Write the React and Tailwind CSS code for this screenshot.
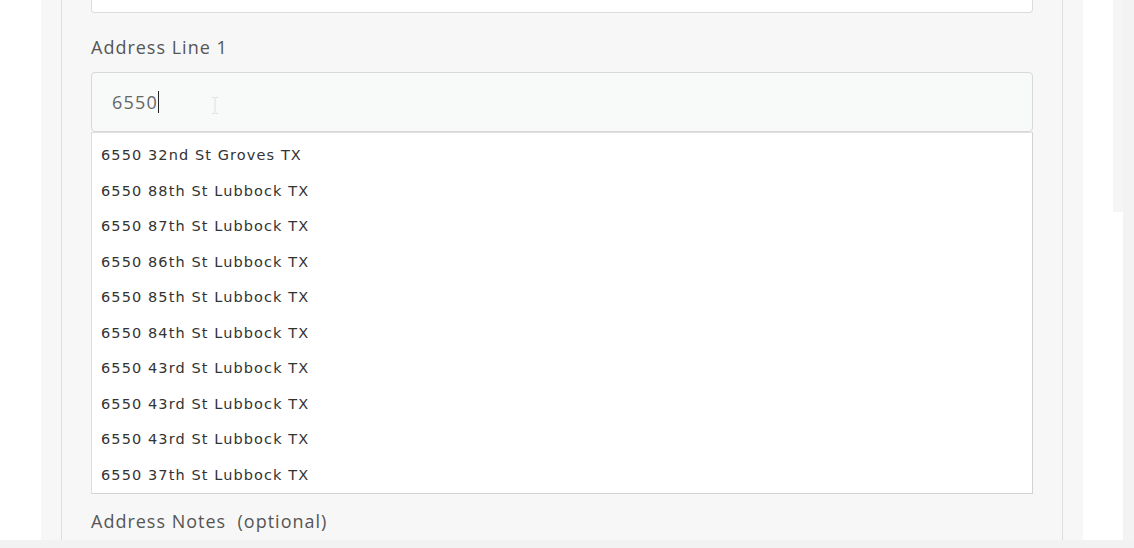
import React from "react";

const suggestions = [
  "6550 32nd St Groves TX",
  "6550 88th St Lubbock TX",
  "6550 87th St Lubbock TX",
  "6550 86th St Lubbock TX",
  "6550 85th St Lubbock TX",
  "6550 84th St Lubbock TX",
  "6550 43rd St Lubbock TX",
  "6550 43rd St Lubbock TX",
  "6550 43rd St Lubbock TX",
  "6550 37th St Lubbock TX",
];

export default function App() {
  return (
    <div className="h-[548px] w-full flex flex-col bg-white overflow-hidden">
      <div className="flex flex-1 min-h-0">
        <div className="w-[41px] bg-white" />

        {/* PANEL */}
        <div className="w-[1042px] bg-[#f7f7f7] px-[20px]">
          <div className="h-full border-x border-[#dcdfe3] px-[29px] font-[family-name:Open_Sans,sans-serif]">
            {/* previous field (cut off) */}
            <div className="h-[13px] bg-white border-x border-b border-[#dcdcdc] rounded-b-[4px]" />

            <label className="block mt-[24px] mb-[15px] text-[18px] leading-[20px] text-[#555] tracking-[1px]">
              Address Line 1
            </label>

            <div className="relative h-[60px] bg-[#f8f9f9] border border-[#d8d8d8] rounded-[4px] flex items-center pl-[20px]">
              <span className="text-[18px] text-[#666] tracking-[1.2px]">6550</span>
              <span className="w-px h-[22px] bg-[#222]" />
              <span className="absolute left-[119px] top-[24px] text-[#dedede]">
                <svg width="8" height="17" viewBox="0 0 8 17" fill="none" stroke="currentColor" strokeWidth="1">
                  <path d="M1 0.5h2.5M4.5 0.5H7M4 1v15M1 16.5h2.5M4.5 16.5H7" />
                </svg>
              </span>
            </div>

            {/* SUGGESTIONS */}
            <ul className="bg-white border border-[#dedede] border-r-[#d2d2d2] border-b-[#d2d2d2] pt-[5px] font-[family-name:DejaVu_Sans,sans-serif]">
              {suggestions.map((s, i) => (
                <li
                  key={i}
                  className="h-[35.5px] flex items-center pt-[1px] px-[9px] text-[14.5px] tracking-[1.1px] text-[#333]"
                >
                  {s}
                </li>
              ))}
            </ul>

            <label className="block mt-[17px] text-[18px] leading-[20px] text-[#555] tracking-[1px]">
              Address Notes &nbsp;(optional)
            </label>
          </div>
        </div>

        {/* right side */}
        <div className="w-[40px] bg-white flex">
          <div className="w-[30px]" />
          <div className="w-[10px] h-[212px] bg-[#f5f5f5]" />
        </div>
        <div className="w-[11px] bg-[#f3f3f3]" />
      </div>
      <div className="h-[8px] bg-[#f2f2f2]" />
    </div>
  );
}
